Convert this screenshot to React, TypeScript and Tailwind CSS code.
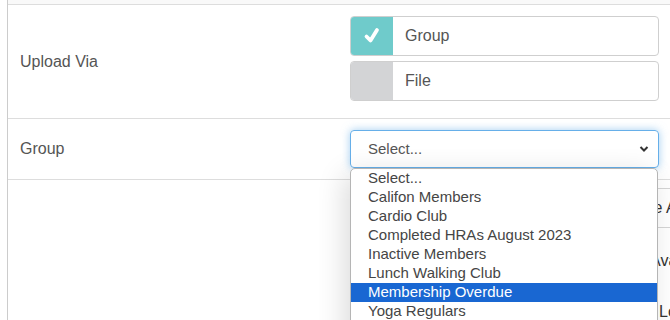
const OPTIONS = [
  "Select...",
  "Califon Members",
  "Cardio Club",
  "Completed HRAs August 2023",
  "Inactive Members",
  "Lunch Walking Club",
  "Membership Overdue",
  "Yoga Regulars",
];

function Choice({ label, checked }: { label: string; checked?: boolean }) {
  return (
    <div className="flex h-[40px] w-[309px] overflow-hidden rounded-[4px] border border-[#cfcfcf] bg-white">
      <div
        className={`flex w-[42px] shrink-0 items-center justify-center ${
          checked ? "bg-[#6fcbcb]" : "bg-[#d3d4d6]"
        }`}
      >
        {checked && (
          <svg width="18" height="18" viewBox="0 0 18 18" fill="none">
            <path d="M3.5 9.5 L7.5 13.5 L14 3" stroke="#fff" strokeWidth="3.8" strokeLinecap="round" strokeLinejoin="round" />
          </svg>
        )}
      </div>
      <span className="flex items-center pl-[12px]">{label}</span>
    </div>
  );
}

export default function App() {
  return (
    <div className="relative h-[320px] w-[670px] overflow-hidden bg-white font-['Liberation_Sans',Arial,sans-serif] text-[16px] text-[#555]">
      <div className="ml-[7px] h-full border-l border-[#cccccc]">
        {/* tail of the previous row */}
        <div className="h-[5px] border-b border-[#dddddd] bg-[#f9f9f9]" />

        {/* Upload Via */}
        <div className="flex h-[114px] items-center border-b border-[#dddddd]">
          <div className="w-[342px] pl-[12px]">Upload Via</div>
          <div className="flex flex-col gap-[5px] pt-[1px] pb-[7px]">
            <Choice label="Group" checked />
            <Choice label="File" />
          </div>
        </div>

        {/* Group */}
        <div className="flex h-[61px] items-center border-b border-[#dddddd]">
          <div className="w-[342px] pl-[12px]">Group</div>
          <div className="flex h-[38px] w-[309px] items-center justify-between rounded-[4px] border border-[#66afe9] pl-[17px] pr-[9px] text-[15px] shadow-[0_0_8px_rgba(102,175,233,0.6)]">
            <span>Select...</span>
            <svg width="10" height="8" viewBox="0 0 10 8" fill="none">
              <path d="M1.5 2 L5 5.5 L8.5 2" stroke="#333" strokeWidth="2" />
            </svg>
          </div>
        </div>

        {/* content behind the open list */}
        <div className="relative h-[140px] text-[#333]">
          <div className="absolute left-[607px] top-[8px] flex h-[40px] w-[120px] items-center border border-[#d5d5d5] pl-[10px]">
            Save All
          </div>
          <div className="absolute left-[642px] top-[69px]">Available</div>
          <div className="absolute left-[651px] top-[120px]">Lo</div>
        </div>
      </div>

      {/* open select list */}
      <div className="absolute left-[350px] top-[168px] w-[308px] overflow-hidden rounded-[5px] border border-[#b5b5b5] bg-white pb-[20px] text-[15px] text-[#454545] shadow-[-6px_6px_28px_rgba(0,0,0,0.14)]">
        {OPTIONS.map((o) => (
          <div
            key={o}
            className={`flex h-[19px] items-center pl-[17px] ${
              o === "Membership Overdue" ? "bg-[#1967d2] text-white" : ""
            }`}
          >
            {o}
          </div>
        ))}
      </div>
    </div>
  );
}
